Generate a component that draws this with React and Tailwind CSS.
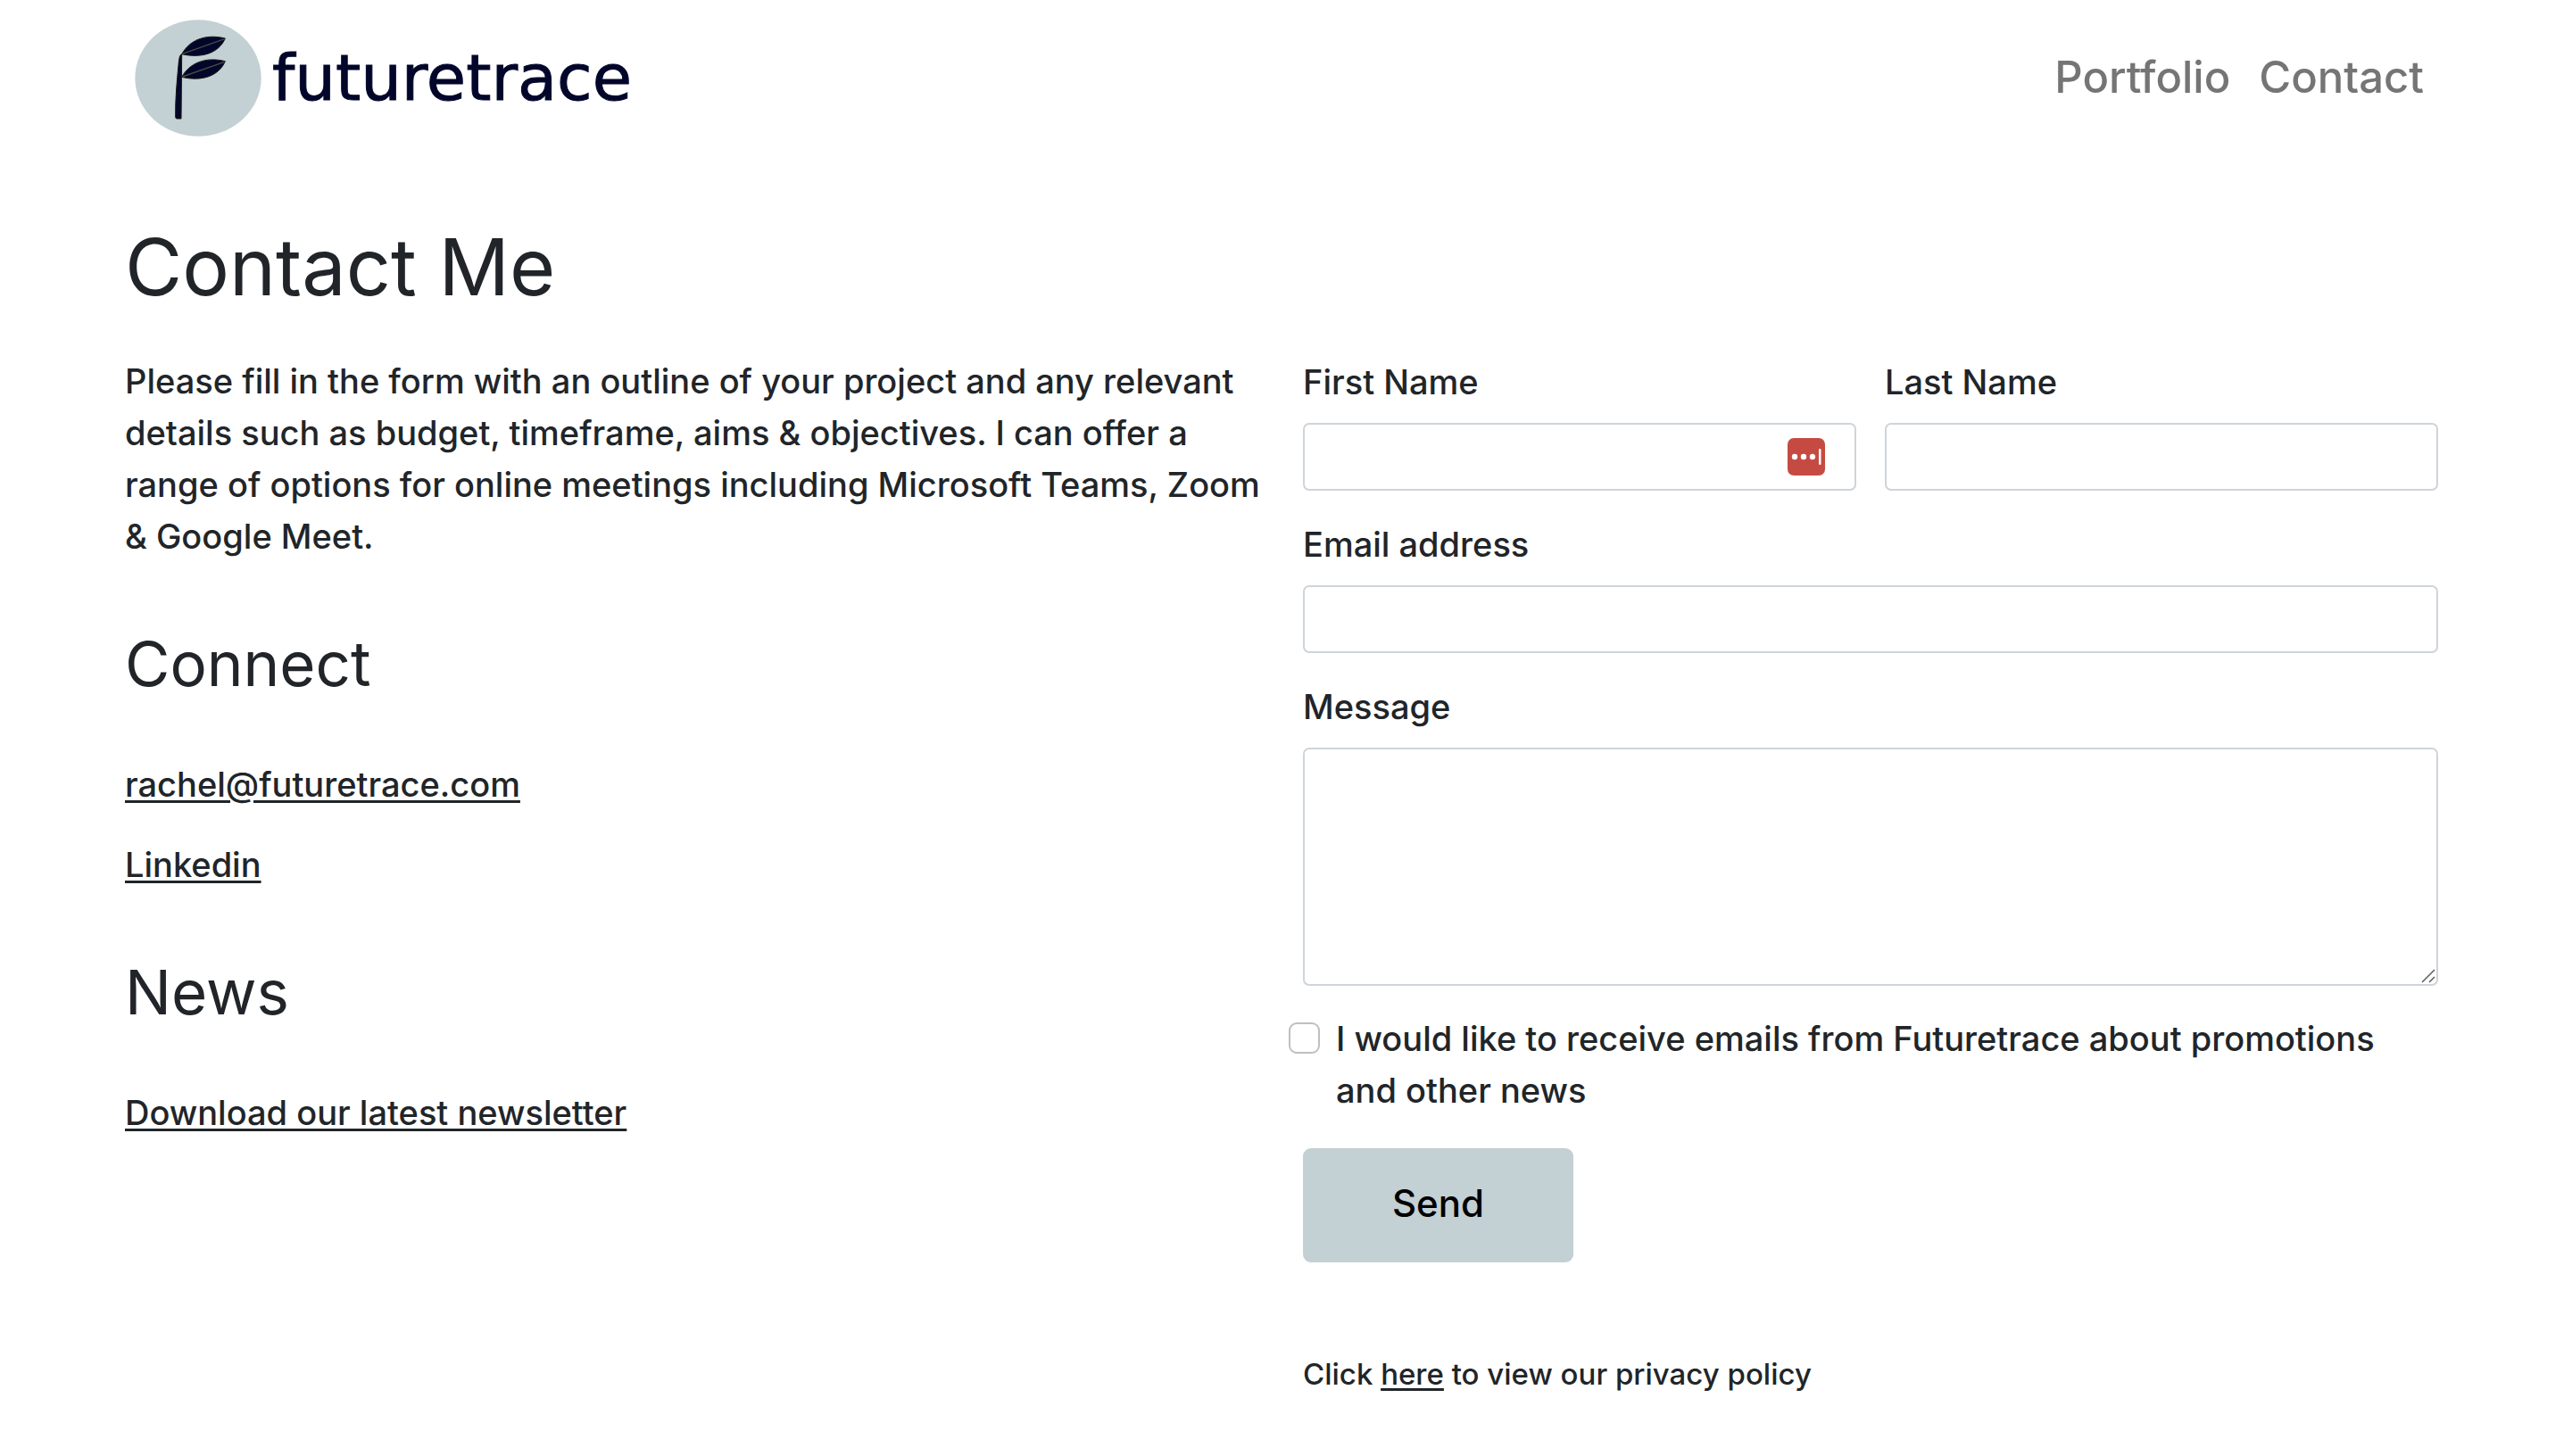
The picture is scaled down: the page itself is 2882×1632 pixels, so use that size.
import React from "react";

const inputClass =
  "block h-[76px] w-full rounded-[7px] border-2 border-[#ced4da] bg-white px-6 outline-none focus:border-[#86a0a5]";
const labelClass = "mb-4 block leading-[60px]";
const linkClass = "underline decoration-[3px] underline-offset-4";

function LogoMark() {
  return (
    <svg viewBox="2 20 426 393" className="h-[131px] w-[142px]" aria-hidden="true">
      <ellipse cx="215" cy="216.500" rx="212" ry="196" fill="#c3d0d4" />
      <g fill="#02062b" stroke="#17170f" strokeWidth="3" strokeLinejoin="round">
        <path d="M160 136C153 138 151 150 149 172C144 226 138 286 139 348Q139 353 144 353H158Z" />
        <path d="M160 136C185 91 237 66 306 83C285 133 226 151 160 136Z" />
        <path d="M160 213C185 168 237 143 306 160C285 210 226 229 160 213Z" />
      </g>
      <g fill="none" stroke="#4b4a42" strokeWidth="4">
        <path d="M162 135Q225 113 304 85" />
        <path d="M162 212Q225 190 304 162" />
      </g>
    </svg>
  );
}

function PasswordManagerIcon() {
  return (
    <svg viewBox="0 0 42 42" className="size-[42px]" aria-hidden="true">
      <rect width="42" height="42" rx="7" fill="#c54b42" />
      <circle cx="8" cy="21" r="3.200" fill="#fff" />
      <circle cx="18" cy="21" r="3.200" fill="#fff" />
      <circle cx="28" cy="21" r="3.200" fill="#fff" />
      <rect x="35" y="12" width="2.500" height="18" rx="1.200" fill="#fff" />
    </svg>
  );
}

function Header() {
  return (
    <header className="flex h-[174px] items-center justify-between pl-[11px] pr-4">
      <a href="#home" className="flex items-center gap-3" aria-label="futuretrace">
        <LogoMark />
        <span className="font-['DejaVu_Sans',sans-serif] text-[72px] leading-[84px] text-[#02062b] [-webkit-text-stroke:1px_#02062b]">
          futuretrace
        </span>
      </a>
      <nav className="flex gap-8 text-[49px] leading-[76px] text-[#757575]">
        <a href="#portfolio">Portfolio</a>
        <a href="#contact">Contact</a>
      </nav>
    </header>
  );
}

function ContactForm() {
  return (
    <form onSubmit={(e) => e.preventDefault()}>
      <div className="grid grid-cols-2 gap-8">
        <div>
          <label htmlFor="first" className={labelClass}>First Name</label>
          <div className="relative">
            <input id="first" type="text" className={inputClass} />
            <span className="absolute right-[35px] top-[17px]">
              <PasswordManagerIcon />
            </span>
          </div>
        </div>
        <div>
          <label htmlFor="last" className={labelClass}>Last Name</label>
          <input id="last" type="text" className={inputClass} />
        </div>
      </div>
      <div className="mt-[30px]">
        <label htmlFor="email" className={labelClass}>Email address</label>
        <input id="email" type="email" className={inputClass} />
      </div>
      <div className="mt-[30px]">
        <label htmlFor="message" className={labelClass}>Message</label>
        <div className="relative">
          <textarea
            id="message"
            className="block h-[267px] w-full resize-none rounded-[7px] border-2 border-[#ced4da] bg-white px-6 py-2 outline-none"
          />
          <svg viewBox="0 0 16 16" className="pointer-events-none absolute bottom-[3px] right-[3px] size-4" fill="none" stroke="#5c5c5c" strokeWidth="1.500" aria-hidden="true">
            <path d="M1 15L15 1M9 15L15 9" />
          </svg>
        </div>
      </div>
      <div className="-ml-4 mt-[30px] flex items-start gap-[18px]">
        <input
          id="promotions"
          type="checkbox"
          className="mt-[11px] size-[35px] shrink-0 appearance-none rounded-[9px] border-2 border-[#bfbfbf] bg-white checked:bg-[#c3d0d4]"
        />
        <label htmlFor="promotions">
          I would like to receive emails from Futuretrace about promotions and other news
        </label>
      </div>
      <button type="submit" className="mt-9 h-32 w-[303px] rounded-[9px] bg-[#c3d0d4] pb-1 text-[42px] font-medium text-black">
        Send
      </button>
      <p className="mt-[100px] text-[33px] leading-[50px]">
        Click <a href="#privacy" className={linkClass}>here</a> to view our privacy policy
      </p>
    </form>
  );
}

export default function App() {
  return (
    <div className="min-h-screen bg-white pl-[140px] pr-[150px] font-['Inter',sans-serif] text-[38px] font-medium leading-[58px] text-[#212529]">
      <Header />
      <main className="pt-[72px]">
        <h1 className="text-[88px] font-normal leading-[106px]">Contact Me</h1>
        <div className="mt-[46px] grid grid-cols-2 gap-12">
          <section>
            <p>
              Please fill in the form with an outline of your project and any relevant details such
              as budget, timeframe, aims &amp; objectives. I can offer a range of options for online
              meetings including Microsoft Teams, Zoom &amp; Google Meet.
            </p>
            <h2 className="mb-16 mt-[72px] text-[69px] font-normal leading-[84px]">Connect</h2>
            <p className="mb-8"><a href="mailto:rachel@futuretrace.com" className={linkClass}>rachel@futuretrace.com</a></p>
            <p><a href="#linkedin" className={linkClass}>Linkedin</a></p>
            <h2 className="mb-16 mt-[72px] text-[69px] font-normal leading-[84px]">News</h2>
            <p><a href="#newsletter" className={linkClass}>Download our latest newsletter</a></p>
          </section>
          <ContactForm />
        </div>
      </main>
    </div>
  );
}
